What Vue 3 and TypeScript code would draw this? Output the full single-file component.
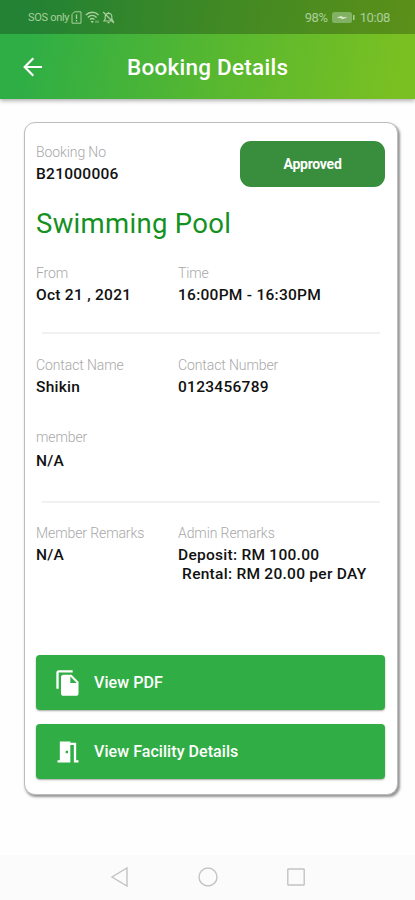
<script setup lang="ts">
interface Field {
  label: string
  lines: string[]
}

const schedule: Field[] = [
  { label: 'From', lines: ['Oct 21 , 2021'] },
  { label: 'Time', lines: ['16:00PM - 16:30PM'] },
]
const contact: Field[] = [
  { label: 'Contact Name', lines: ['Shikin'] },
  { label: 'Contact Number', lines: ['0123456789'] },
]
const remarks: Field[] = [
  { label: 'Member Remarks', lines: ['N/A'] },
  { label: 'Admin Remarks', lines: ['Deposit: RM 100.00', ' Rental: RM 20.00 per DAY'] },
]
</script>

<template>
  <div class="screen">
    <div class="top">
      <div class="status">
        <span class="carrier">SOS only</span>
        <svg class="sim" width="11" height="13" viewBox="0 0 11 13" fill="none" stroke="currentColor">
          <path d="M1 3.500 3.500.8H10v11.400H1z" /><path d="M5.500 3.500v4.500M5.500 9v1.500" stroke-width="1.300" />
        </svg>
        <svg class="wifi" width="15" height="13" viewBox="0 0 15 13" fill="none" stroke="currentColor" stroke-width="1.400">
          <path d="M.8 4C4.500.4 10 .4 13.600 4M2.800 6.400c2.600-2.500 6.200-2.500 8.800 0M5 8.600c1.400-1.300 3-1.300 4.400 0" />
          <path d="m7.200 12.200-1.700-2.200h3.400z" fill="currentColor" stroke="none" /><path d="M11 9.500v2.500M13 9.500v2.500" stroke-width=".8" />
        </svg>
        <svg class="bell" width="13" height="13" viewBox="0 0 13 13" fill="none" stroke="currentColor" stroke-width="1.200">
          <path d="M2 10h9L9.800 8V5.500C9.800 3.500 8.500 2.300 6.500 2.300S3.200 3.500 3.200 5.500V8zM5.500 11.700h2M6.500 1v1M1.200 1l10.800 11" />
        </svg>
        <span class="percent">98%</span>
        <svg class="battery" width="23" height="11" viewBox="0 0 23 11">
          <rect x="0" y="0" width="20" height="11" rx="2.500" fill="currentColor" opacity=".55" />
          <path d="M21 3h1.500v5H21z" fill="currentColor" /><path d="m5.500 5.500 4-1.300.5 1 4.500.4-4.500 1.300-.5-1z" fill="#e6f3dc" stroke="#e6f3dc" stroke-width=".4" />
        </svg>
        <span class="clock">10:08</span>
      </div>
      <header class="bar">
        <svg class="back" width="20" height="20" viewBox="0 0 20 20" fill="none" stroke="#fff" stroke-width="2.200">
          <path d="M19 10H2M10.300 1.300 1.700 10l8.600 8.700" />
        </svg>
        <h1>Booking Details</h1>
      </header>
    </div>

    <main>
      <section class="card">
        <div class="summary">
          <div class="field">
            <span class="label">Booking No</span>
            <span class="value">B21000006</span>
          </div>
          <span class="badge">Approved</span>
        </div>
        <h2>Swimming Pool</h2>
        <div class="row schedule">
          <div v-for="f in schedule" :key="f.label" class="field">
            <span class="label">{{ f.label }}</span>
            <span v-for="l in f.lines" :key="l" class="value">{{ l }}</span>
          </div>
        </div>
        <hr />
        <div class="row contact">
          <div v-for="f in contact" :key="f.label" class="field">
            <span class="label">{{ f.label }}</span>
            <span v-for="l in f.lines" :key="l" class="value">{{ l }}</span>
          </div>
        </div>
        <div class="row member">
          <div class="field">
            <span class="label">member</span>
            <span class="value">N/A</span>
          </div>
        </div>
        <hr />
        <div class="row remarks">
          <div v-for="f in remarks" :key="f.label" class="field">
            <span class="label">{{ f.label }}</span>
            <span v-for="l in f.lines" :key="l" class="value">{{ l }}</span>
          </div>
        </div>
        <div class="actions">
          <button type="button">
            <svg width="28" height="28" viewBox="0 0 24 24" fill="#fff">
              <path d="M16 1H4c-1.100 0-2 .9-2 2v14h2V3h12V1zm-1 4 6 6v10c0 1.100-.9 2-2 2H7.990C6.890 23 6 22.100 6 21l.010-14c0-1.100.890-2 1.990-2h7zm-1 7h5.500L14 6.500V12z" />
            </svg>
            <span>View PDF</span>
          </button>
          <button type="button">
            <svg width="28" height="28" viewBox="0 0 24 24" fill="#fff">
              <path d="M14 6v15H3v-2h2V3h9v1h5v15h2v2h-4V6h-3zm-4 5v2h2v-2h-2z" />
            </svg>
            <span>View Facility Details</span>
          </button>
        </div>
      </section>
    </main>

    <nav>
      <svg width="20" height="22" viewBox="0 0 20 22"><path d="M17 2v18L2 11z" /></svg>
      <svg width="20" height="22" viewBox="0 0 20 22"><circle cx="10" cy="11" r="9" /></svg>
      <svg width="20" height="22" viewBox="0 0 20 22"><rect x="1.800" y="3" width="16.400" height="16" rx=".5" /></svg>
    </nav>
  </div>
</template>

<style>
body {
  background: #fff;
}
</style>

<style scoped>
.screen {
  display: flex;
  flex-direction: column;
  width: 415px;
  height: 900px;
  overflow: hidden;
  background: #fefefe;
  font-family: Roboto, sans-serif;
}
.top {
  height: 99px;
  flex: none;
  background: linear-gradient(100deg, #2fae45 8%, #59b82f 55%, #7ac022 96%);
  box-shadow: 0 2px 4px rgba(0, 0, 0, 0.3);
}
.status {
  display: flex;
  align-items: center;
  height: 34px;
  box-sizing: border-box;
  padding: 1px 25px 0 28px;
  background: rgba(0, 0, 0, 0.25);
  color: #a9cf9c;
  font-size: 13px;
}
.carrier {
  width: 43px;
  font-size: 11px;
  letter-spacing: -0.300px;
  white-space: nowrap;
}
.wifi {
  margin-left: 3px;
}
.bell {
  margin-left: 2px;
}
.percent {
  margin-left: auto;
  letter-spacing: -0.400px;
}
.battery {
  margin: 0 5px 0 4px;
}
.clock {
  letter-spacing: -0.400px;
}
.bar {
  display: flex;
  align-items: center;
  height: 65px;
  padding-left: 23px;
}
h1 {
  margin: 1px 0 0 84px;
  color: #fff;
  font-size: 22.500px;
  font-weight: 500;
  line-height: 28px;
  letter-spacing: 0.250px;
}
main {
  flex: 1;
  padding: 23px 17px 0 24px;
}
.card {
  height: 673px;
  box-sizing: border-box;
  padding: 18px 12px 0 11px;
  border: 1px solid #bdbdbd;
  border-radius: 11px;
  background: #fff;
  box-shadow: 1.500px 2px 2.500px rgba(0, 0, 0, 0.42);
}
.summary {
  display: flex;
  justify-content: space-between;
  height: 46px;
}
.field {
  display: flex;
  flex-direction: column;
}
.label {
  color: #a8a8a8;
  font-size: 14px;
  font-weight: 300;
  line-height: 22px;
  letter-spacing: -0.100px;
}
.value {
  color: #111;
  font-size: 15.500px;
  font-weight: 500;
  line-height: 19px;
  letter-spacing: 0.270px;
  white-space: pre;
}
.summary .value {
  margin-top: 2px;
}
.badge {
  display: grid;
  place-items: center;
  width: 145px;
  height: 46px;
  border-radius: 11px;
  background: #388e3c;
  color: #fff;
  font-size: 14px;
  font-weight: 700;
  letter-spacing: -0.250px;
}
h2 {
  margin: 20px 0 0;
  color: #14911f;
  font-size: 27.500px;
  font-weight: 400;
  line-height: 34px;
  letter-spacing: 0.300px;
}
.row {
  display: grid;
  grid-template-columns: 142px 1fr;
}
.row .value:nth-child(2) {
  margin-top: 2px;
}
.schedule {
  height: 70px;
  padding-top: 21px;
}
hr {
  height: 2px;
  margin: 0 5px 0 6px;
  border: 0;
  background: #f1f1f1;
}
.contact {
  height: 72px;
  padding-top: 20px;
}
.member {
  height: 75px;
}
.member .value:nth-child(2) {
  margin-top: 4px;
}
.remarks {
  height: 133px;
  padding-top: 19px;
}
.actions {
  display: grid;
  gap: 14px;
}
button {
  display: flex;
  align-items: center;
  width: 100%;
  height: 55px;
  padding: 0 18px;
  border: 0;
  border-radius: 4px;
  background: #31ad45;
  box-shadow: 0 1px 2px rgba(0, 0, 0, 0.35);
  color: #fff;
  font: 500 16px/20px Roboto, sans-serif;
  letter-spacing: 0.060px;
}
button span {
  margin: 1px 0 0 12px;
}
nav {
  display: flex;
  flex: none;
  justify-content: center;
  align-items: center;
  gap: 68px;
  height: 45px;
  box-sizing: border-box;
  padding-bottom: 2px;
  background: #fbfbfb;
}
nav svg {
  fill: none;
  stroke: #c3c3c3;
  stroke-width: 1.400;
}
</style>
